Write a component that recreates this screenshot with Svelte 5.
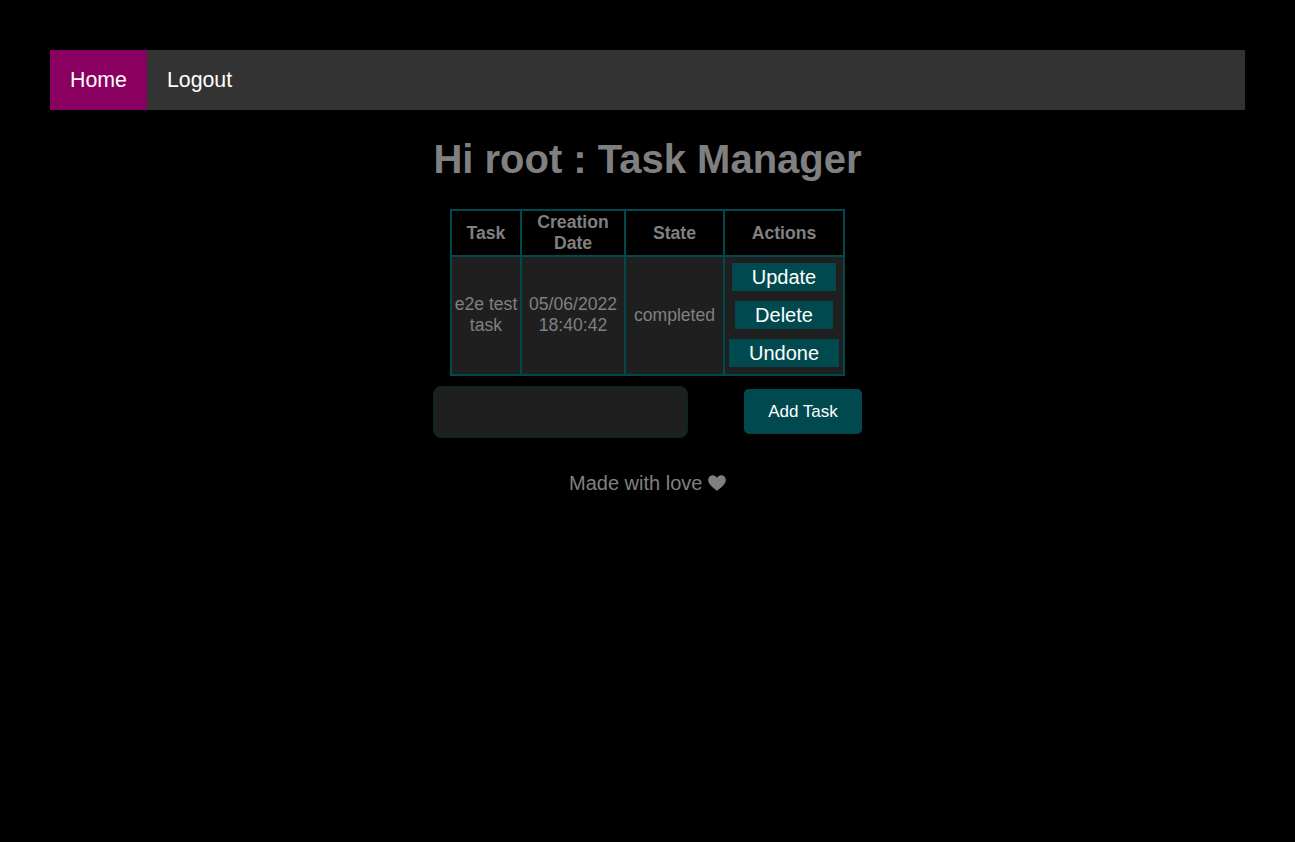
<script>
  const actions = ['Update', 'Delete', 'Undone'];
</script>

<div class="page">
  <nav class="nav">
    <a class="link active" href="#home">Home</a>
    <a class="link" href="#logout">Logout</a>
  </nav>
  <main class="main">
    <h1 class="title">Hi root : Task Manager</h1>
    <table class="tasks">
      <thead>
        <tr>
          <th class="c1">Task</th>
          <th class="c2">Creation Date</th>
          <th class="c3">State</th>
          <th class="c4">Actions</th>
        </tr>
      </thead>
      <tbody>
        <tr>
          <td>e2e test task</td>
          <td>05/06/2022 18:40:42</td>
          <td>completed</td>
          <td>
            <div class="actions">
              {#each actions as a}
                <button class="act" type="button">{a}</button>
              {/each}
            </div>
          </td>
        </tr>
      </tbody>
    </table>
    <form class="add" onsubmit={(e) => e.preventDefault()}>
      <input class="field" type="text" aria-label="Task" />
      <button class="submit" type="submit">Add Task</button>
    </form>
    <p class="foot">Made with love <svg class="heart" viewBox="0 0 18 16" width="18" height="16" aria-hidden="true"><path d="M9 15.800C7.600 14.400.9 10.200.2 6 -.2 2.800 2 .3 4.700.3 6.500.3 8 1.300 9 3 10 1.300 11.500.3 13.300.3c2.700 0 4.900 2.500 4.500 5.700C17.100 10.200 10.400 14.400 9 15.800z" fill="#808080"/></svg></p>
  </main>
</div>

<style>
  :global(body) {
    margin: 0;
    background: #000;
    font-family: "Liberation Sans", Arial, sans-serif;
  }
  .page {
    padding: 50px;
    box-sizing: border-box;
    min-height: 842px;
  }
  .nav {
    display: flex;
    height: 60px;
    background: #333;
  }
  .link {
    display: flex;
    align-items: center;
    padding: 0 20px;
    color: #fff;
    font-size: 21.33px;
    text-decoration: none;
  }
  .active {
    background: #8a0060;
  }
  .main {
    display: flex;
    flex-direction: column;
    align-items: center;
  }
  .title {
    margin: 26px 0 27px;
    color: #808080;
    font-size: 40px;
    line-height: 46px;
    font-weight: 700;
  }
  .tasks {
    table-layout: fixed;
    width: 395px;
    border-collapse: collapse;
    color: #808080;
    font-size: 17.6px;
    line-height: 21px;
    text-align: center;
  }
  th, td {
    border: 2px solid #004a4f;
    padding: 0;
  }
  th {
    height: 44px;
    background: #000;
  }
  td {
    background: #1f1f1f;
    height: 116px;
    padding-bottom: 1px;
  }
  .c1 { width: 68px; }
  .c2 { width: 102px; }
  .c3 { width: 97px; }
  .c4 { width: 118px; }
  .actions {
    display: flex;
    flex-direction: column;
    align-items: center;
    gap: 10px;
  }
  .act {
    height: 28px;
    padding: 0 20px;
    border: 0;
    background: #004a4f;
    color: #fff;
    font: 20px/28px "Liberation Sans", Arial, sans-serif;
  }
  .add {
    display: flex;
    align-items: center;
    gap: 56px;
    margin-top: 10px;
  }
  .field {
    width: 255px;
    height: 52px;
    box-sizing: border-box;
    border: 1px solid #00282b;
    border-radius: 8px;
    background: #1f1f1f;
  }
  .submit {
    width: 118px;
    height: 45px;
    margin-bottom: 1px;
    border: 0;
    border-radius: 5px;
    background: #004a4f;
    color: #fff;
    font: 17px "Liberation Sans", Arial, sans-serif;
  }
  .foot {
    margin: 34px 0 0;
    color: #808080;
    font-size: 20px;
    line-height: 23px;
  }
  .heart {
    vertical-align: -1px;
  }
</style>
